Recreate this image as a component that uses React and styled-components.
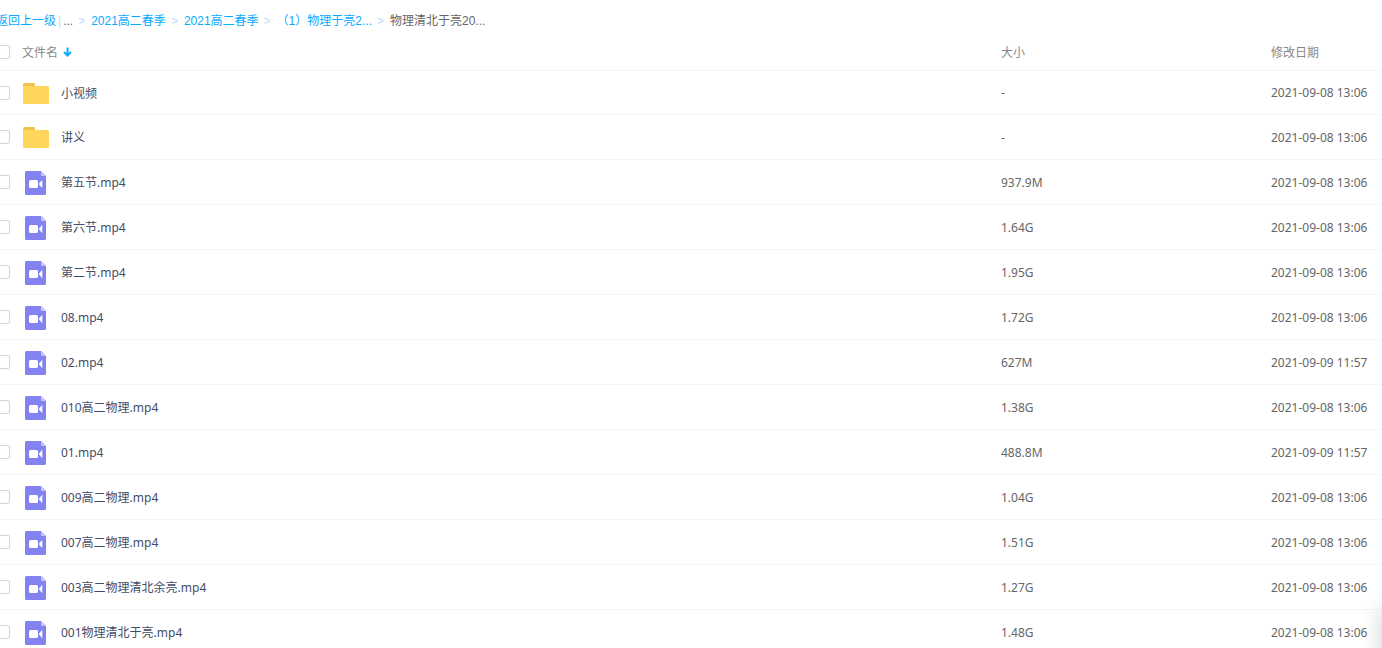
import React, { useState } from "react";
import styled, { createGlobalStyle } from "styled-components";

const crumbs = ["2021高二春季", "2021高二春季", "（1）物理于亮2..."];

const initialFiles = [
  { id: 1, type: "folder", name: "小视频", size: "-", date: "2021-09-08 13:06" },
  { id: 2, type: "folder", name: "讲义", size: "-", date: "2021-09-08 13:06" },
  { id: 3, type: "video", name: "第五节.mp4", size: "937.9M", date: "2021-09-08 13:06" },
  { id: 4, type: "video", name: "第六节.mp4", size: "1.64G", date: "2021-09-08 13:06" },
  { id: 5, type: "video", name: "第二节.mp4", size: "1.95G", date: "2021-09-08 13:06" },
  { id: 6, type: "video", name: "08.mp4", size: "1.72G", date: "2021-09-08 13:06" },
  { id: 7, type: "video", name: "02.mp4", size: "627M", date: "2021-09-09 11:57" },
  { id: 8, type: "video", name: "010高二物理.mp4", size: "1.38G", date: "2021-09-08 13:06" },
  { id: 9, type: "video", name: "01.mp4", size: "488.8M", date: "2021-09-09 11:57" },
  { id: 10, type: "video", name: "009高二物理.mp4", size: "1.04G", date: "2021-09-08 13:06" },
  { id: 11, type: "video", name: "007高二物理.mp4", size: "1.51G", date: "2021-09-08 13:06" },
  { id: 12, type: "video", name: "003高二物理清北余亮.mp4", size: "1.27G", date: "2021-09-08 13:06" },
  { id: 13, type: "video", name: "001物理清北于亮.mp4", size: "1.48G", date: "2021-09-08 13:06" },
];

function FolderIcon() {
  return (
    <svg width="26" height="21" viewBox="0 0 26 21" aria-hidden="true">
      <path d="M0 1.5Q0 0 1.5 0H10.5Q12 0 12 1.5V8H0Z" fill="#eec04d" />
      <path d="M0 3H24.5Q26 3 26 4.5V19.5Q26 21 24.5 21H1.5Q0 21 0 19.5Z" fill="#ffd55c" />
    </svg>
  );
}

function VideoIcon() {
  return (
    <svg width="21" height="24" viewBox="0 0 21 24" aria-hidden="true">
      <path d="M0 1.5Q0 0 1.5 0H16L21 5V22.5Q21 24 19.5 24H1.5Q0 24 0 22.5Z" fill="#8283f0" />
      <path d="M16 0L21 5H17Q16 5 16 4Z" fill="#c5c5fa" />
      <rect x="4" y="9" width="9" height="8" rx="1.5" fill="#fff" />
      <path d="M14 13L17 9.5V16.5Z" fill="#fff" stroke="#fff" strokeWidth="0.6" strokeLinejoin="round" />
    </svg>
  );
}

function SortArrow() {
  return (
    <svg width="9" height="10" viewBox="0 0 9 10" aria-hidden="true">
      <path d="M4.5 0.5V8.5M1 5L4.5 8.5L8 5" fill="none" stroke="#09aaff" strokeWidth="2" />
    </svg>
  );
}

export default function App() {
  const [selected, setSelected] = useState([]);
  const allSelected = selected.length === initialFiles.length;

  const toggleAll = () => {
    setSelected(allSelected ? [] : initialFiles.map((file) => file.id));
  };

  const toggle = (id) => {
    setSelected(selected.includes(id) ? selected.filter((item) => item !== id) : [...selected, id]);
  };

  return (
    <Page>
      <GlobalStyle />
      <Breadcrumb aria-label="路径">
        <CrumbLink href="#">返回上一级</CrumbLink>
        <Divider>|</Divider>
        <span>...</span>
        {crumbs.map((crumb, index) => (
          <React.Fragment key={index}>
            <Separator>&gt;</Separator>
            <CrumbLink href="#">{crumb}</CrumbLink>
          </React.Fragment>
        ))}
        <Separator>&gt;</Separator>
        <span>物理清北于亮20...</span>
      </Breadcrumb>
      <Table>
        <thead>
          <tr>
            <HeadCell $width={26}>
              <Checkbox aria-label="全选" checked={allSelected} onChange={toggleAll} />
            </HeadCell>
            <HeadCell>
              <SortButton>
                文件名
                <SortArrow />
              </SortButton>
            </HeadCell>
            <HeadCell $width={270}>大小</HeadCell>
            <HeadCell $width={111}>修改日期</HeadCell>
          </tr>
        </thead>
        <tbody>
          {initialFiles.map((file) => (
            <Row key={file.id}>
              <Cell>
                <Checkbox
                  aria-label={file.name}
                  checked={selected.includes(file.id)}
                  onChange={() => toggle(file.id)}
                />
              </Cell>
              <Cell>
                <FileName>
                  <IconSlot>{file.type === "folder" ? <FolderIcon /> : <VideoIcon />}</IconSlot>
                  <FileLink href="#">{file.name}</FileLink>
                </FileName>
              </Cell>
              <Cell>{file.size}</Cell>
              <Cell>{file.date}</Cell>
            </Row>
          ))}
        </tbody>
      </Table>
      <SidePanel />
    </Page>
  );
}

const GlobalStyle = createGlobalStyle`
  * {
    box-sizing: border-box;
  }

  body {
    margin: 0;
    background: #fff;
    overflow: hidden;
  }
`;

const Page = styled.div`
  height: 100vh;
  margin-left: -4px;
  overflow: hidden;
  font-family: "Noto Sans", "Noto Sans CJK SC", sans-serif;
  font-size: 12px;
  color: #666;
`;

const Breadcrumb = styled.nav`
  display: flex;
  align-items: center;
  height: 34px;
  padding-top: 8px;
  font-family: "Liberation Sans", "Noto Sans CJK SC", sans-serif;
  line-height: 18px;
  white-space: nowrap;
`;

const CrumbLink = styled.a`
  color: #09aaff;
  text-decoration: none;

  &:hover {
    text-decoration: underline;
  }
`;

const Divider = styled.span`
  margin: 0 2px;
  color: #c4dbfe;
`;

const Separator = styled.span`
  margin: 0 6px 0 5px;
  color: #c4dbfe;
`;

const Table = styled.table`
  width: 100%;
  table-layout: fixed;
  border-collapse: separate;
  border-spacing: 0;
`;

const HeadCell = styled.th`
  width: ${({ $width }) => ($width ? `${$width}px` : "auto")};
  height: 37px;
  padding: 0;
  border-bottom: 1px solid #f2f6fd;
  color: #888;
  font-weight: 400;
  text-align: left;
  vertical-align: middle;
`;

const SortButton = styled.button`
  display: flex;
  align-items: center;
  gap: 5px;
  padding: 0;
  border: 0;
  background: none;
  color: inherit;
  font: inherit;
  cursor: pointer;
`;

const Cell = styled.td`
  height: 45px;
  padding: 0;
  border-bottom: 1px solid #f2f6fd;
  vertical-align: middle;
  white-space: nowrap;
`;

const Row = styled.tr`
  &:first-child ${Cell} {
    height: 44px;
  }

  &:hover {
    background: #f4fbff;
  }
`;

const Checkbox = styled.input.attrs({ type: "checkbox" })`
  display: block;
  appearance: none;
  width: 14px;
  height: 14px;
  margin: 0;
  border: 1px solid #d0d5e0;
  border-radius: 2px;
  background: #fff;

  &:checked {
    border-color: #09aaff;
    background: #09aaff;
  }
`;

const FileName = styled.div`
  display: flex;
  align-items: center;
  gap: 12px;
  padding-left: 1px;
`;

const IconSlot = styled.span`
  display: flex;
  justify-content: center;
  width: 26px;
  padding-top: 1px;

  svg[width="21"] {
    margin-right: 1px;
  }
`;

const FileLink = styled.a`
  color: #424e67;
  text-decoration: none;

  &:hover {
    color: #09aaff;
  }
`;

/* sits past the right edge, only its shadow reaches the list */
const SidePanel = styled.aside`
  position: fixed;
  left: 100%;
  bottom: -160px;
  width: 200px;
  height: 200px;
  box-shadow: 0 0 20px rgba(0, 0, 0, 0.2);
`;
